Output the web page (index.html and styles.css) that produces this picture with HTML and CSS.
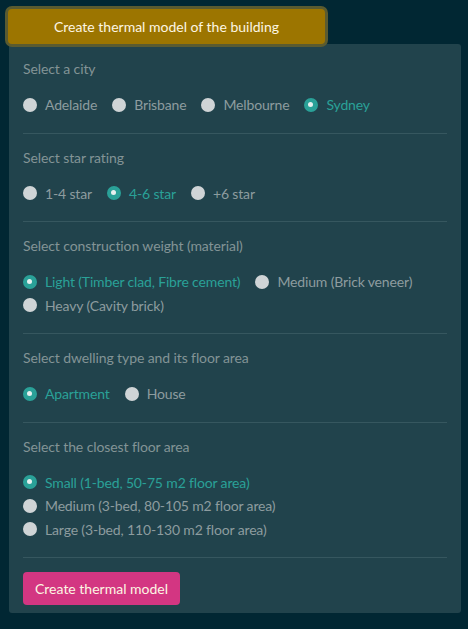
FILE: index.html
```html
<!DOCTYPE html>
<html lang="en">
<head>
<meta charset="utf-8">
<title>Thermal model</title>
<link rel="stylesheet" href="styles.css">
</head>
<body>
<div class="page">
  <button class="tab-btn" type="button">Create thermal model of the building</button>
  <div class="panel">
    <section class="section">
      <div class="title">Select a city</div>
      <div class="group">
        <label class="opt"><span class="dot"></span>Adelaide</label>
        <label class="opt"><span class="dot"></span>Brisbane</label>
        <label class="opt"><span class="dot"></span>Melbourne</label>
        <label class="opt on"><span class="dot"></span>Sydney</label>
      </div>
    </section>
    <section class="section">
      <div class="title">Select star rating</div>
      <div class="group">
        <label class="opt"><span class="dot"></span>1-4 star</label>
        <label class="opt on"><span class="dot"></span>4-6 star</label>
        <label class="opt"><span class="dot"></span>+6 star</label>
      </div>
    </section>
    <section class="section">
      <div class="title">Select construction weight (material)</div>
      <div class="group">
        <label class="opt on"><span class="dot"></span>Light (Timber clad, Fibre cement)</label>
        <label class="opt"><span class="dot"></span>Medium (Brick veneer)</label>
        <label class="opt"><span class="dot"></span>Heavy (Cavity brick)</label>
      </div>
    </section>
    <section class="section">
      <div class="title">Select dwelling type and its floor area</div>
      <div class="group">
        <label class="opt on"><span class="dot"></span>Apartment</label>
        <label class="opt"><span class="dot"></span>House</label>
      </div>
    </section>
    <section class="section">
      <div class="title">Select the closest floor area</div>
      <div class="group stack">
        <label class="opt on"><span class="dot"></span>Small (1-bed, 50-75 m2 floor area)</label>
        <label class="opt"><span class="dot"></span>Medium (3-bed, 80-105 m2 floor area)</label>
        <label class="opt"><span class="dot"></span>Large (3-bed, 110-130 m2 floor area)</label>
      </div>
    </section>
    <div class="actions">
      <button class="go-btn" type="button">Create thermal model</button>
    </div>
  </div>
</div>
</body>
</html>
```
FILE: styles.css
```css
html, body {
  margin: 0;
  padding: 0;
  background: #012733;
  height: 100%;
}
body {
  font-family: Lato, "Noto Sans", sans-serif;
  font-size: 14px;
  color: #839496;
}
.page {
  padding: 9px 7px 0 9px;
}
.tab-btn {
  position: relative;
  z-index: 1;
  display: block;
  margin-left: -1px;
  width: 317px;
  height: 35px;
  border: none;
  border-radius: 4px;
  background: #9c7500;
  color: #fdf6e3;
  font-family: inherit;
  font-size: 14px;
  box-shadow: 0 0 0 3px #5a5b30;
  padding: 0;
}
.panel {
  background: #21434c;
  border-radius: 3px;
  padding: 1px 14px 8px 14px;
}
.section {
  padding: 14px 0 16px;
  border-bottom: 1px solid #36575f;
}
.title {
  line-height: 20px;
  margin-bottom: 14px;
  letter-spacing: -0.1px;
}
.group {
  display: flex;
  flex-wrap: wrap;
  column-gap: 15px;
}
.group.stack {
  flex-direction: column;
}
.opt {
  display: flex;
  align-items: center;
  line-height: 23.5px;
  color: #8d9c9f;
  letter-spacing: -0.15px;
}
.opt.on {
  color: #2aa198;
}
.dot {
  width: 14px;
  height: 14px;
  border-radius: 50%;
  background: #cfd4d6;
  margin-right: 8px;
  box-sizing: border-box;
}
.opt.on .dot {
  background: #2aa198;
  border: 4.5px solid #2aa198;
}
.opt.on .dot::after {
  content: "";
  display: block;
  width: 5px;
  height: 5px;
  border-radius: 50%;
  background: #e6f0ef;
}
.actions {
  padding-top: 14px;
}
.go-btn {
  display: block;
  height: 33px;
  padding: 0 12px;
  border: none;
  border-radius: 4px;
  background: #d33682;
  color: #fdf6e3;
  font-family: inherit;
  font-size: 14px;
}
```
